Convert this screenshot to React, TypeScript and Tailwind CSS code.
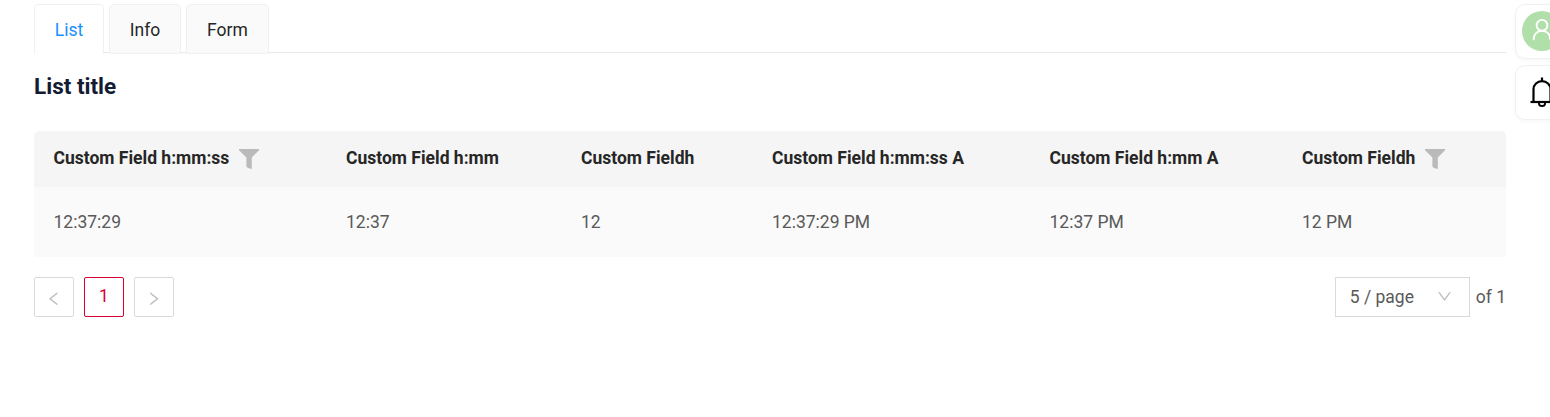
import { AiOutlineLeft, AiOutlineRight, AiOutlineDown } from "react-icons/ai";

const columns = [
  { title: "Custom Field h:mm:ss", value: "12:37:29", filter: true },
  { title: "Custom Field h:mm", value: "12:37", filter: false },
  { title: "Custom Fieldh", value: "12", filter: false },
  { title: "Custom Field h:mm:ss A", value: "12:37:29 PM", filter: false },
  { title: "Custom Field h:mm A", value: "12:37 PM", filter: false },
  { title: "Custom Fieldh", value: "12 PM", filter: true },
];

function FunnelIcon() {
  return (
    <svg className="mt-[3px] ml-[9.5px] h-5 w-5 shrink-0 text-[#bababa]" viewBox="0 0 20 20" fill="currentColor">
      <path d="M0 0H20V1.2L12.8 8.4V20L9 19L7.4 17.6V8.4L0 1.2Z" />
    </svg>
  );
}

function UserIcon() {
  return (
    <svg className="h-10 w-10" viewBox="0 0 40 40" fill="none" stroke="currentColor" strokeWidth="1.9" strokeLinecap="round">
      <circle cx="20" cy="14.3" r="5.4" />
      <path d="M11.7 28.3C11.7 23.3 15.2 19.8 20 19.8S28.3 23.3 28.3 28.3" />
    </svg>
  );
}

function BellIcon() {
  return (
    <svg className="h-[30px] w-[26px]" viewBox="0 0 26 30" fill="none" stroke="currentColor" strokeWidth="2.2">
      <path d="M13 0.5V4M4.5 25V12.3C4.5 7.6 8.3 4.2 13 4.2S21.5 7.6 21.5 12.3V25" />
      <path d="M1.5 25H24.5" />
      <path d="M10 26V26.4C10 28 11.3 29 13 29S16 28 16 26.4V26" strokeWidth="1.9" />
    </svg>
  );
}

function Tabs() {
  return (
    <div className="mt-1 flex h-[49px] gap-[5px] text-[17.5px] leading-[51px] shadow-[inset_0_-1px_0_#e8e8e8]">
      <div className="h-[50px] w-[70px] rounded-t-[5px] border border-b-0 border-[#f0f0f0] bg-white text-center text-[#1890ff]">List</div>
      <div className="h-[50px] w-[72px] rounded-t-[5px] border border-[#f0f0f0] bg-[#fafafa] text-center text-[#262626]">Info</div>
      <div className="h-[50px] w-[83px] rounded-t-[5px] border border-[#f0f0f0] bg-[#fafafa] text-center text-[#262626]">Form</div>
    </div>
  );
}

function Table() {
  return (
    <div className="mt-[30px] grid grid-cols-[292.5px_235px_191px_277.5px_252.5px_1fr] overflow-hidden rounded-t-[5px] rounded-b-[2px] text-[17.5px]">
      {columns.map((c, i) => (
        <div key={i} className="flex h-[56px] bg-[#f5f5f5] pt-[15px] pl-[19.5px] leading-6 font-bold text-[#262626]">
          <span className="whitespace-nowrap">{c.title}</span>
          {c.filter && <FunnelIcon />}
        </div>
      ))}
      {columns.map((c, i) => (
        <div key={i} className="h-[70px] bg-[#fafafa] pl-[19.5px] leading-[70px] text-[#595959]">{c.value}</div>
      ))}
    </div>
  );
}

function Pagination() {
  return (
    <div className="mt-5 flex items-center justify-between text-[17.5px] text-[#595959]">
      <div className="flex gap-[10px]">
        <button className="flex h-10 w-10 items-center justify-center rounded-[2px] border border-[#d9d9d9] pt-[3px] pr-px text-[#bfbfbf]"><AiOutlineLeft /></button>
        <button className="flex h-10 w-10 items-center justify-center rounded-[2px] border border-[#dc0032] pb-[2px] text-[#dc0032]">1</button>
        <button className="flex h-10 w-10 items-center justify-center rounded-[2px] border border-[#d9d9d9] pt-[3px] pr-px text-[#bfbfbf]"><AiOutlineRight /></button>
      </div>
      <div className="flex items-center gap-[6px]">
        <div className="flex h-10 w-[135px] items-center justify-between border border-[#d9d9d9] pr-4 pl-[14px]">
          <span>5 / page</span>
          <AiOutlineDown className="mb-px h-[17px] w-[17px] text-[#bfbfbf]" />
        </div>
        <span>of 1</span>
      </div>
    </div>
  );
}

export default function App() {
  return (
    <div className="flex h-[417px] w-full overflow-hidden bg-white pl-[34px] font-[Roboto,sans-serif]">
      <main className="w-[1472px] shrink-0">
        <Tabs />
        <h1 className="mt-[18px] text-[22.5px] leading-[30px] font-bold text-[#141c33]">List title</h1>
        <Table />
        <Pagination />
      </main>
      <aside className="ml-[9px] flex w-[70px] shrink-0 flex-col gap-[6px] pt-1">
        <div className="h-[55px] w-full rounded-l-[10px] border border-[#f0f0f0] pt-[6px] pl-[6px] shadow-[0_2px_4px_rgba(0,0,0,0.03)]">
          <div className="h-10 w-10 rounded-full bg-[#b1dfaa] text-white">
            <UserIcon />
          </div>
        </div>
        <div className="h-[55px] w-full rounded-l-[10px] border border-[#f0f0f0] pt-[11px] pl-[13px] text-black shadow-[0_2px_4px_rgba(0,0,0,0.03)]">
          <BellIcon />
        </div>
      </aside>
    </div>
  );
}
